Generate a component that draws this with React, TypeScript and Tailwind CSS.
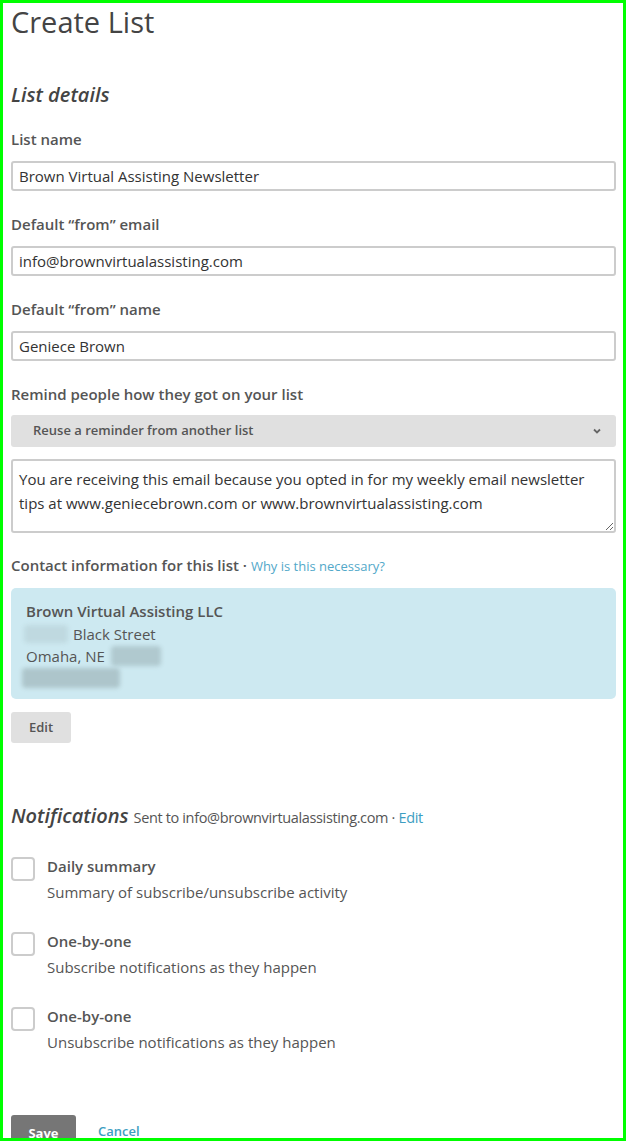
import React from "react";

const font = { fontFamily: '"Open Sans", "Noto Sans", sans-serif' };

function Field({ label, value }: { label: string; value: string }) {
    return (
        <div className="mt-[22px]">
            <label className="block text-[15px] font-semibold text-[#555] leading-[22px]">{label}</label>
            <input
                readOnly
                value={value}
                className="mt-[11px] block w-full h-[30px] border-2 border-[#ccc] rounded-[3px] px-[6px] text-[15px] text-[#333] outline-none"
            />
        </div>
    );
}

function Notice({ title, desc }: { title: string; desc: string }) {
    return (
        <div className="flex gap-[12px]">
            <span className="mt-[2px] w-[24px] h-[24px] shrink-0 rounded-[4px] border-2 border-[#ccc] bg-white" />
            <div>
                <div className="text-[15px] font-semibold text-[#555] leading-[22px]">{title}</div>
                <div className="mt-[4px] text-[15px] text-[#555] leading-[22px]">{desc}</div>
            </div>
        </div>
    );
}

export default function App() {
    return (
        <div style={font} className="w-[626px] h-[1141px] border-[3px] border-[#00ff00] bg-white overflow-hidden text-[#444]">
            <div className="pl-[8px] pr-[7px]">
                <h1 className="text-[29px] leading-[38px] text-[#444]">Create List</h1>

                <h2 className="mt-[40px] text-[20px] italic font-semibold leading-[28px] text-[#444]">List details</h2>

                <div className="-mt-[3px]">
                    <Field label="List name" value="Brown Virtual Assisting Newsletter" />
                    <Field label="Default “from” email" value="info@brownvirtualassisting.com" />
                    <Field label="Default “from” name" value="Geniece Brown" />
                </div>

                <div className="mt-[22px] text-[15px] font-semibold text-[#555] leading-[22px]">
                    Remind people how they got on your list
                </div>
                <div className="mt-[10px] h-[32px] rounded-[3px] bg-[#e0e0e0] flex items-center justify-between pl-[22px] pr-[14px]">
                    <span className="text-[13px] font-semibold text-[#555]">Reuse a reminder from another list</span>
                    <svg width="10" height="8" viewBox="0 0 10 8" fill="none" stroke="#666" strokeWidth="1.8">
                        <path d="M2 2.5 L5 5.5 L8 2.5" />
                    </svg>
                </div>
                <textarea
                    readOnly
                    value="You are receiving this email because you opted in for my weekly email newsletter tips at www.geniecebrown.com or www.brownvirtualassisting.com"
                    className="mt-[12px] block w-full h-[74px] border-2 border-[#ccc] rounded-[3px] px-[6px] pt-[6px] text-[15px] leading-[24px] text-[#333] outline-none"
                />

                <div className="mt-[21px] leading-[22px]">
                    <span className="text-[15px] font-semibold text-[#555]">Contact information for this list · </span>
                    <span className="text-[13px] text-[#52a8c9]">Why is this necessary?</span>
                </div>
                <div className="mt-[11px] h-[111px] rounded-[5px] bg-[#cde9f1] px-[15px] pt-[12px] text-[15px] leading-[22.5px] text-[#555]">
                    <div className="font-semibold">Brown Virtual Assisting LLC</div>
                    <div className="flex items-center">
                        <span className="-ml-[2px] inline-block w-[44px] h-[18px] rounded-[4px] bg-[#bfd9e0] blur-[2px]" />
                        <span className="ml-[5px]">Black Street</span>
                    </div>
                    <div className="flex items-center">
                        <span>Omaha, NE</span>
                        <span className="ml-[6px] inline-block w-[50px] h-[20px] rounded-[4px] bg-[#b0c9cf] blur-[2px]" />
                    </div>
                    <div className="flex items-center">
                        <span className="-ml-[4px] inline-block w-[98px] h-[20px] rounded-[4px] bg-[#adc5cb] blur-[2px]" />
                    </div>
                </div>
                <button className="mt-[13px] w-[60px] h-[31px] rounded-[3px] bg-[#e0e0e0] text-[13px] font-semibold text-[#555]">
                    Edit
                </button>

                <div className="mt-[58px] flex items-baseline gap-[5px]">
                    <span className="text-[20px] italic font-semibold text-[#444] leading-[30px]">Notifications</span>
                    <span className="text-[14.5px] text-[#555] tracking-[-0.35px]">
                        Sent to info@brownvirtualassisting.com · <span className="text-[#3d9ec2]">Edit</span>
                    </span>
                </div>

                <div className="mt-[24px] flex flex-col gap-[27px]">
                    <Notice title="Daily summary" desc="Summary of subscribe/unsubscribe activity" />
                    <Notice title="One-by-one" desc="Subscribe notifications as they happen" />
                    <Notice title="One-by-one" desc="Unsubscribe notifications as they happen" />
                </div>

                <div className="mt-[62px] flex items-center gap-[22px]">
                    <button className="w-[65px] h-[34px] rounded-[3px] bg-[#767676] text-[13px] font-bold text-white pt-[4px]">
                        Save
                    </button>
                    <span className="text-[13px] font-semibold text-[#3d9ec2]">Cancel</span>
                </div>
            </div>
        </div>
    );
}
